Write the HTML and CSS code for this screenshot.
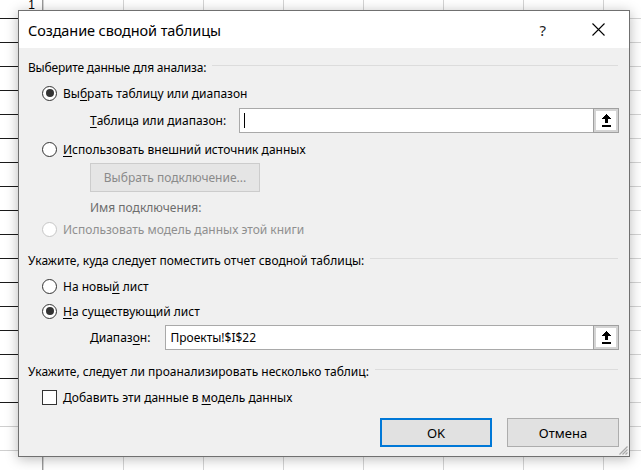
FILE: index.html
```html
<!DOCTYPE html>
<html lang="ru">
<head>
<meta charset="utf-8">
<link rel="stylesheet" href="styles.css">
</head>
<body>
<div class="sheet">
  <div class="rowhead">
    <div class="rh-num">1</div>
    <div class="rh-dark"></div>
    <div class="rh-light"></div>
  </div>

  <div class="dialog">
    <div class="titlebar">
      <span class="title">Создание сводной таблицы</span>
      <span class="help">?</span>
      <svg class="close" width="13" height="13" viewBox="0 0 13 13"><path d="M0.5 0.5 L12.5 12.5 M12.5 0.5 L0.5 12.5" stroke="#000" stroke-width="1.1" fill="none"/></svg>
    </div>
    <div class="content">
      <div class="group g1"><span>Выберите данные для анализа:</span><div class="line"></div></div>

      <div class="opt o1"><span class="radio on"></span><span>Вы<u>б</u>рать таблицу или диапазон</span></div>

      <div class="field f1">
        <span class="flabel"><u>Т</u>аблица или диапазон:</span>
        <div class="input"><span class="caret"></span></div>
        <div class="pick"><svg width="9" height="13" viewBox="0 0 9 13" shape-rendering="crispEdges"><path d="M4 0 H5 V1 H6 V2 H7 V3 H8 V4 H9 V5 H6 V9 H3 V5 H0 V4 H1 V3 H2 V2 H3 V1 H4 Z M0 11 H9 V13 H0 Z" fill="#000"/></svg></div>
      </div>

      <div class="opt o2"><span class="radio"></span><span><u>И</u>спользовать внешний источник данных</span></div>

      <div class="btn-dis">Выбрать подключение...</div>

      <div class="conn">Имя подключения:</div>

      <div class="opt o3 dis"><span class="radio"></span><span>Использовать модель данных этой книги</span></div>

      <div class="group g2"><span>Укажите, куда следует поместить отчет сводной таблицы:</span><div class="line"></div></div>

      <div class="opt o4"><span class="radio"></span><span>На новы<u>й</u> лист</span></div>
      <div class="opt o5"><span class="radio on"></span><span><u>Н</u>а существующий лист</span></div>

      <div class="field f2">
        <span class="flabel">Диапаз<u>о</u>н:</span>
        <div class="input"><span class="val">Проекты!$I$22</span></div>
        <div class="pick"><svg width="9" height="13" viewBox="0 0 9 13" shape-rendering="crispEdges"><path d="M4 0 H5 V1 H6 V2 H7 V3 H8 V4 H9 V5 H6 V9 H3 V5 H0 V4 H1 V3 H2 V2 H3 V1 H4 Z M0 11 H9 V13 H0 Z" fill="#000"/></svg></div>
      </div>

      <div class="group g3"><span>Укажите, следует ли проанализировать несколько таблиц:</span><div class="line"></div></div>

      <div class="opt o6"><span class="check"></span><span>Добавить эти данные в <u>м</u>одель данных</span></div>

      <div class="actions">
        <div class="btn ok">OK</div>
        <div class="btn">Отмена</div>
      </div>
    </div>
    <svg class="grip" width="10" height="10" viewBox="0 0 10 10"><path d="M9.5 1.5 L1.5 9.5 M9.5 4.5 L4.5 9.5 M9.5 7.5 L7.5 9.5" stroke="#a8a8a8" stroke-width="1.2" fill="none"/></svg>
  </div>
</div>
</body>
</html>
```

FILE: styles.css
```css
* { box-sizing: border-box; }
html, body { margin: 0; padding: 0; }
body {
  width: 641px;
  height: 470px;
  overflow: hidden;
  background: #fff;
  font-family: "Noto Sans", "Open Sans", sans-serif;
  font-size: 12px;
  color: #000;
}
.sheet {
  position: relative;
  width: 641px;
  height: 470px;
  background-color: #fff;
  background-image:
    repeating-linear-gradient(to right, transparent 0, transparent 42px, #d4d4d4 42px, #d4d4d4 43px, transparent 43px, transparent 80px),
    repeating-linear-gradient(to bottom, transparent 0, transparent 18px, #d4d4d4 18px, #d4d4d4 19px, transparent 19px, transparent 24px);
  background-position: 1px 0, 0 0;
  background-size: 80px 100%, 100% 24px;
}
.rowhead {
  position: absolute;
  left: 0;
  top: 0;
  width: 43px;
  height: 470px;
  background: #fff;
  border-right: 1px solid #9a9a9a;
  display: flex;
  flex-direction: column;
}
.rh-num {
  position: absolute;
  right: 7px;
  top: -1px;
  font-family: "Liberation Sans", sans-serif;
  font-size: 12px;
  line-height: 12px;
}
.rh-dark {
  height: 408px;
  background-image: repeating-linear-gradient(to bottom, transparent 0, transparent 18px, #1a1a1a 18px, #1a1a1a 19px, transparent 19px, transparent 24px);
  background-size: 100% 24px;
}
.rh-light {
  flex: 1;
  background-image: repeating-linear-gradient(to bottom, transparent 0, transparent 18px, #cfcfcf 18px, #cfcfcf 19px, transparent 19px, transparent 24px);
  background-size: 100% 24px;
  background-position: 0 0;
}

.dialog {
  position: absolute;
  left: 18px;
  top: 10px;
  width: 612px;
  height: 447px;
  border: 1px solid #707070;
  background: #f0f0f0;
  box-shadow: 0 2px 12px rgba(0,0,0,0.28);
  display: flex;
  flex-direction: column;
}
.titlebar {
  height: 37px;
  background: #fff;
  display: flex;
  align-items: center;
  padding-left: 9px;
  flex: none;
}
.title {
  font-size: 14.5px;
  letter-spacing: -0.1px;
  flex: 1;
  padding-top: 1px;
}
.help {
  font-size: 15px;
  margin-right: 46px;
  color: #222;
}
.close {
  margin-right: 24px;
  display: block;
}
.content {
  flex: 1;
  padding: 9px 10px 0 9px;
  display: flex;
  flex-direction: column;
}
.group {
  height: 20px;
  display: flex;
  align-items: center;
  white-space: nowrap;
}
.g1 span { letter-spacing: -0.2px; }
.group .line {
  flex: 1;
  height: 1px;
  background: #dcdcdc;
  margin-left: 6px;
  margin-bottom: 3px;
  margin-right: 1px;
}
.g2 { margin-top: 11px; }
.g3 { margin-top: 11px; }

.opt {
  height: 20px;
  display: flex;
  align-items: center;
  margin-left: 14px;
  white-space: nowrap;
}
.o1 { margin-top: 6px; }
.o2 { margin-top: 6px; }
.o3 { margin-top: 3px; }
.o4 { margin-top: 6px; }
.o5 { margin-top: 5px; }
.o6 { margin-top: 6px; }
.opt.dis { color: #8f8f8f; }

.radio {
  width: 15px;
  height: 15px;
  border: 1px solid #333;
  border-radius: 50%;
  background: #fff;
  margin-right: 6px;
  display: flex;
  align-items: center;
  justify-content: center;
  flex: none;
}
.radio.on::after {
  content: "";
  width: 8px;
  height: 8px;
  border-radius: 50%;
  background: #333;
}
.dis .radio { border-color: #c6c6c6; }
.check {
  width: 15px;
  height: 15px;
  border: 1px solid #333;
  background: #fff;
  margin-right: 6px;
  flex: none;
}
u { text-decoration-thickness: 1px; text-underline-offset: 2px; }

.field {
  height: 25px;
  display: flex;
  align-items: stretch;
  margin-left: 62px;
}
.f1 { margin-top: 5px; }
.f2 { margin-top: 4px; }
.flabel {
  display: flex;
  align-items: center;
  white-space: nowrap;
}
.f1 .flabel { margin-right: 13px; }
.f2 .flabel { margin-right: 15px; }
.input {
  flex: 1;
  background: #fff;
  border: 1px solid #a9a9a9;
  border-right: none;
  display: flex;
  align-items: center;
  padding-left: 4px;
}
.caret {
  width: 1px;
  height: 15px;
  background: #000;
}
.val { white-space: nowrap; }
.pick {
  width: 26px;
  flex: none;
  border: 1px solid #a0a0a0;
  box-shadow: inset 0 0 0 2px #d4d4d4;
  background: #fff;
  display: flex;
  align-items: center;
  justify-content: center;
}
.pick svg { display: block; }

.btn-dis {
  margin-top: 4px;
  margin-left: 62px;
  width: 170px;
  height: 29px;
  border: 1px solid #cccccc;
  background: #e5e5e5;
  color: #8a8a8a;
  display: flex;
  align-items: center;
  justify-content: center;
}
.conn {
  margin-top: 6px;
  margin-left: 62px;
  height: 18px;
  display: flex;
  align-items: center;
  color: #6d6d6d;
}

.actions {
  margin-top: 11px;
  display: flex;
  justify-content: flex-end;
  gap: 15px;
}
.btn {
  width: 112px;
  height: 29px;
  background: #e1e1e1;
  border: 1px solid #adadad;
  display: flex;
  align-items: center;
  justify-content: center;
  font-size: 13px;
}
.btn.ok { border: 2px solid #0078d7; }
.grip {
  position: absolute;
  right: 1px;
  bottom: 1px;
}
```
